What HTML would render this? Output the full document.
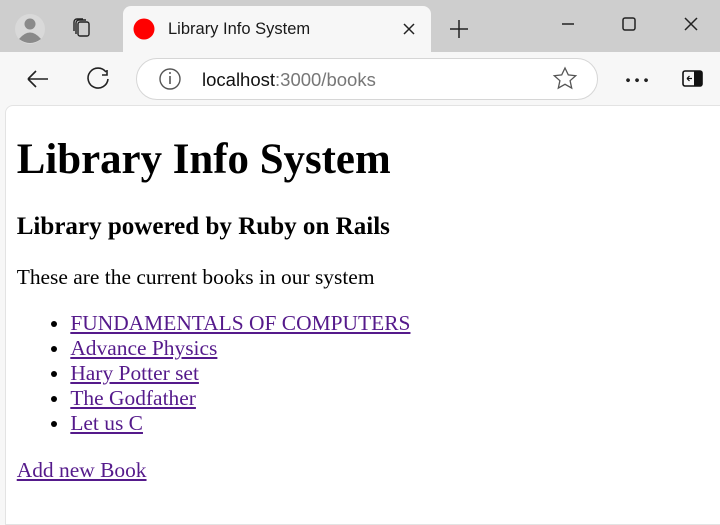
<!DOCTYPE html>
<html><head><style>
*{box-sizing:border-box}
html,body{margin:0;padding:0;width:720px;height:502px;overflow:hidden;background:#f7f7f7;font-family:"Liberation Sans",sans-serif}
.strip{position:absolute;left:0;top:0;width:720px;height:52px;background:#cecece}
.tab{position:absolute;left:123px;top:6px;width:308px;height:46px;background:#f7f7f7;border-radius:8px 8px 0 0}
.url{position:absolute;left:136px;top:58px;width:462px;height:42px;border:1px solid #d6d6d6;border-radius:21px;background:#fff}
.page{position:absolute;left:5px;top:105px;width:720px;height:420px;background:#fff;border:1px solid #e3e3e3;border-radius:8px 0 0 0}
.content{zoom:1.34;font-family:"Liberation Serif",serif;font-size:16px;margin:0 8px;color:#000}
.content h1{font-size:32px;margin:22px 0 21px}
.content h3{font-size:18.7px;margin:0 0 18px}
.content p{margin:0 0 16px}
.content ul{margin:0 0 16px;padding-left:40px}
a{color:#551a8b}
.t{position:absolute;font-size:16px;color:#1a1a1a}
</style></head><body>
<div class="strip"></div>
<div class="tab"></div>
<svg style="position:absolute;left:0;top:0" width="720" height="106">
<circle cx="30" cy="29" r="15" fill="#d9d9d9"/>
<circle cx="30" cy="24" r="5.5" fill="#8a8a8a"/>
<path d="M19 39 q11 -13 22 0 q-11 8 -22 0z" fill="#8a8a8a"/>
<g fill="none" stroke="#222" stroke-width="1.4">
<rect x="78" y="22" width="11" height="14" rx="2"/>
<path d="M76 34 v-11 a3 3 0 0 1 3-3 h7"/><path d="M74 31 v-9 a3 3 0 0 1 3-3 h6"/>
</g>
<circle cx="144" cy="29" r="10.5" fill="#f00"/>
<path d="M404 24 l10 10 M414 24 l-10 10" stroke="#222" stroke-width="1.5"/>
<path d="M459 20 v18 M450 29 h18" stroke="#222" stroke-width="1.5"/>
<path d="M562 24 h12" stroke="#222" stroke-width="1.5"/>
<rect x="623" y="18" width="12" height="12" rx="2" fill="none" stroke="#222" stroke-width="1.5"/>
<path d="M685 18 l12 12 M697 18 l-12 12" stroke="#222" stroke-width="1.5"/>
<path d="M28 79 h20 M28 79 l8 -8 M28 79 l8 8" stroke="#222" stroke-width="1.6" fill="none"/>
<path d="M106 72 a10 10 0 1 0 2 7 M107 70 v5 h-5" stroke="#222" stroke-width="1.6" fill="none"/>
<path d="M637 79 m-9 0 a1.2 1.2 0 1 0 0.1 0 M637 79 a1.2 1.2 0 1 0 .1 0 M646 79 a1.2 1.2 0 1 0 .1 0" fill="#222" stroke="#222" stroke-width="1.4"/>
<rect x="683" y="71" width="19" height="15" rx="2" fill="none" stroke="#111" stroke-width="1.6"/>
<rect x="694" y="71" width="8" height="15" fill="#111"/>
<path d="M687 78.5 h5 M687 78.5 l2.5 -2.5 M687 78.5 l2.5 2.5" stroke="#111" stroke-width="1.2" fill="none"/>
</svg>
<div class="t" style="left:168px;top:20px;font-size:16.5px">Library Info System</div>
<div class="url"></div>
<svg style="position:absolute;left:0;top:0" width="720" height="106">
<circle cx="170" cy="79" r="10" fill="none" stroke="#555" stroke-width="1.4"/>
<path d="M170 76 v8" stroke="#555" stroke-width="1.6"/><circle cx="170" cy="73" r="1" fill="#555"/>
<path d="M565 68 l3.3 6.9 7.4 .8 -5.6 5 1.6 7.4 -6.7 -3.8 -6.7 3.8 1.6 -7.4 -5.6 -5 7.4 -.8z" fill="none" stroke="#555" stroke-width="1.3"/>
</svg>
<div class="t" style="left:202px;top:69px;font-size:18.5px;color:#111">localhost<span style="color:#777">:3000/books</span></div>
<div class="page"><div class="content">
<h1>Library Info System</h1>
<h3>Library powered by Ruby on Rails</h3>
<p>These are the current books in our system</p>
<ul>
<li><a href="#">FUNDAMENTALS OF COMPUTERS</a></li>
<li><a href="#">Advance Physics</a></li>
<li><a href="#">Hary Potter set</a></li>
<li><a href="#">The Godfather</a></li>
<li><a href="#">Let us C</a></li>
</ul>
<a href="#">Add new Book</a>
</div></div>
</body></html>
